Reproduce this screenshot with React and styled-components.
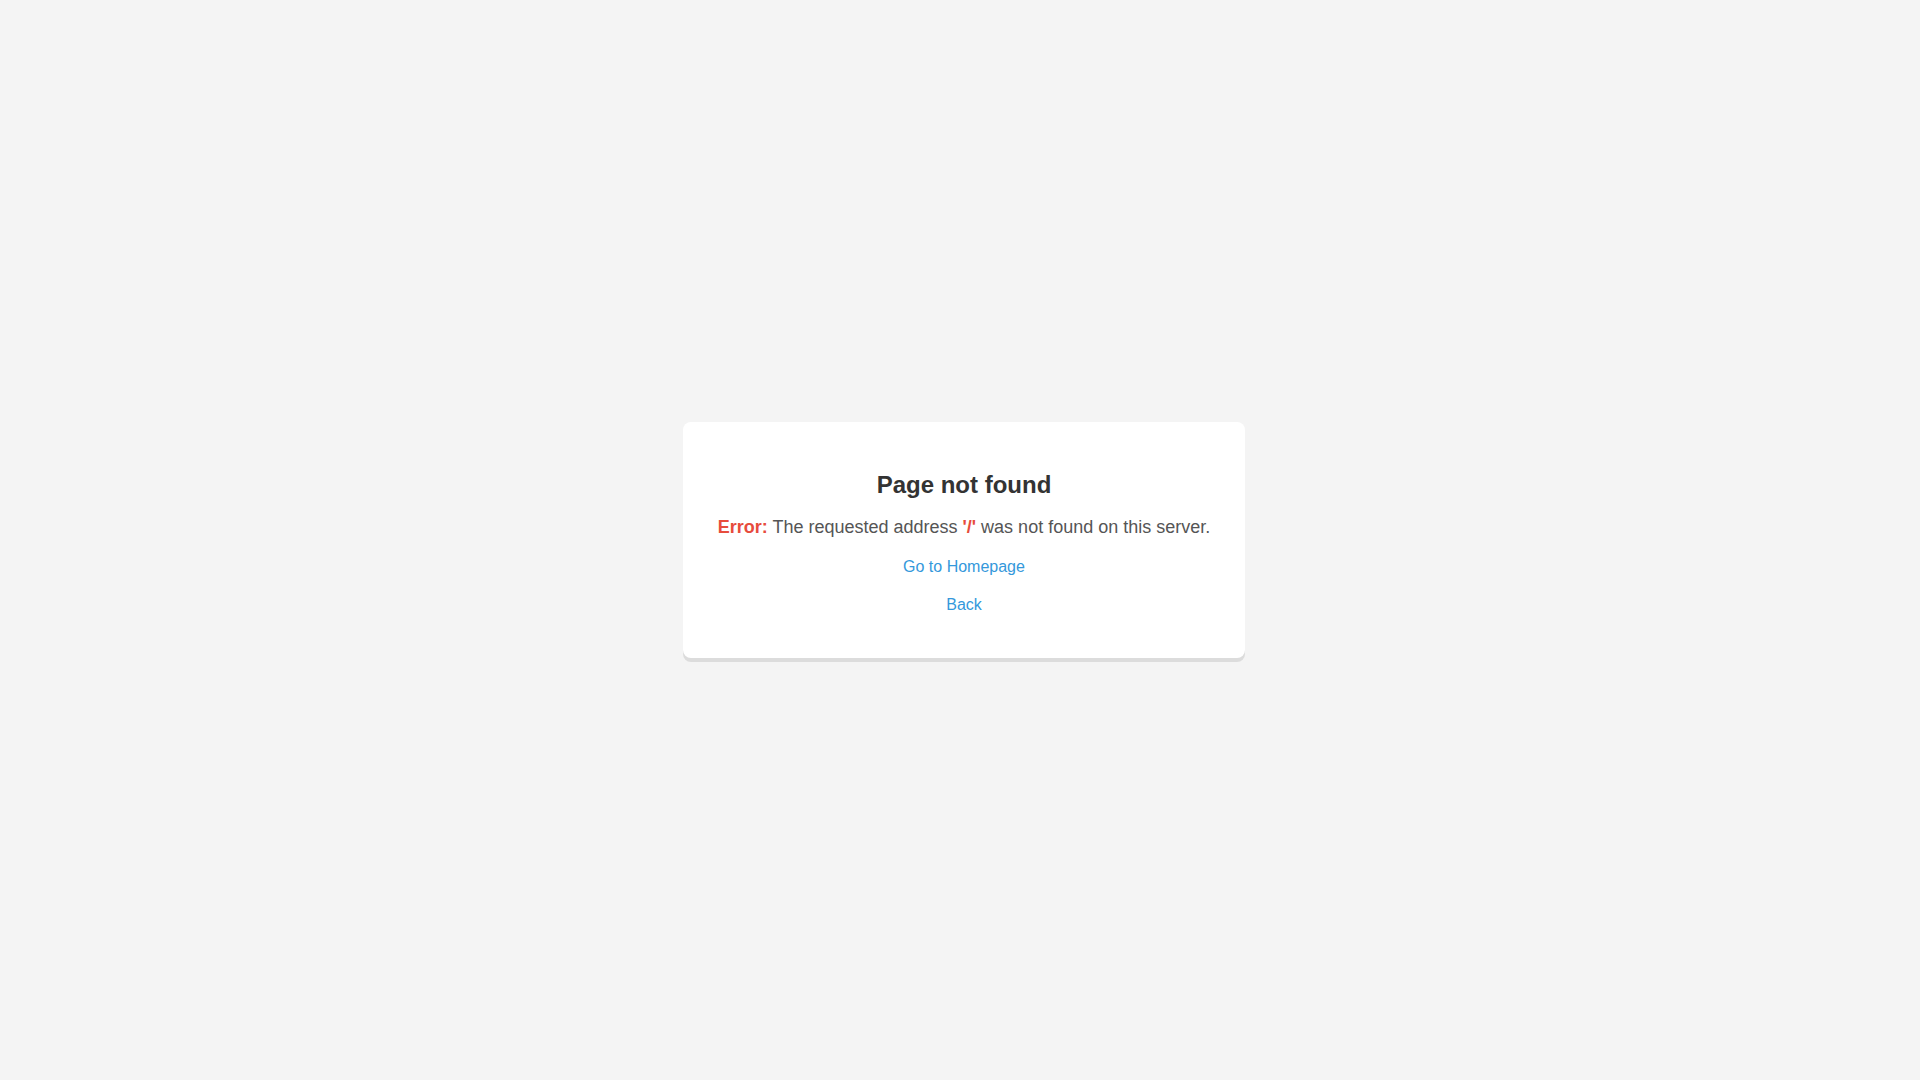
import React from 'react'
import styled, { createGlobalStyle } from 'styled-components'

const GlobalStyle = createGlobalStyle`
  html, body {
    margin: 0;
    padding: 0;
    height: 100%;
  }
  body {
    background: #f4f4f4;
    font-family: 'Liberation Sans', Arial, sans-serif;
  }
  #root {
    height: 100%;
  }
`

const Page = styled.div`
  min-height: 100vh;
  box-sizing: border-box;
  padding-left: 8px;
  display: flex;
  align-items: center;
  justify-content: center;
`

const Card = styled.div`
  background: #fff;
  border-radius: 8px;
  box-shadow: 0 4px 0 #dcdcdc;
  padding: 49px 35px 44px;
  display: flex;
  flex-direction: column;
  align-items: center;
`

const Title = styled.h1`
  margin: 0;
  font-size: 24px;
  line-height: 28px;
  font-weight: 700;
  color: #333;
`

const Message = styled.p`
  margin: 18px 0 0;
  font-size: 18px;
  line-height: 20px;
  color: #555;
`

const Highlight = styled.strong`
  color: #e74c3c;
  font-weight: 700;
`

const Link = styled.a`
  margin-top: ${({ gap }) => gap}px;
  font-size: 16px;
  line-height: 18px;
  color: #3498db;
  text-decoration: none;
  cursor: pointer;
`

const App = () => (
  <>
    <GlobalStyle />
    <Page>
      <Card>
        <Title>Page not found</Title>
        <Message>
          <Highlight>Error:</Highlight> The requested address <Highlight>'/'</Highlight> was not found on this server.
        </Message>
        <Link href="#" gap={21}>Go to Homepage</Link>
        <Link href="#" gap={20}>Back</Link>
      </Card>
    </Page>
  </>
)

export default App
